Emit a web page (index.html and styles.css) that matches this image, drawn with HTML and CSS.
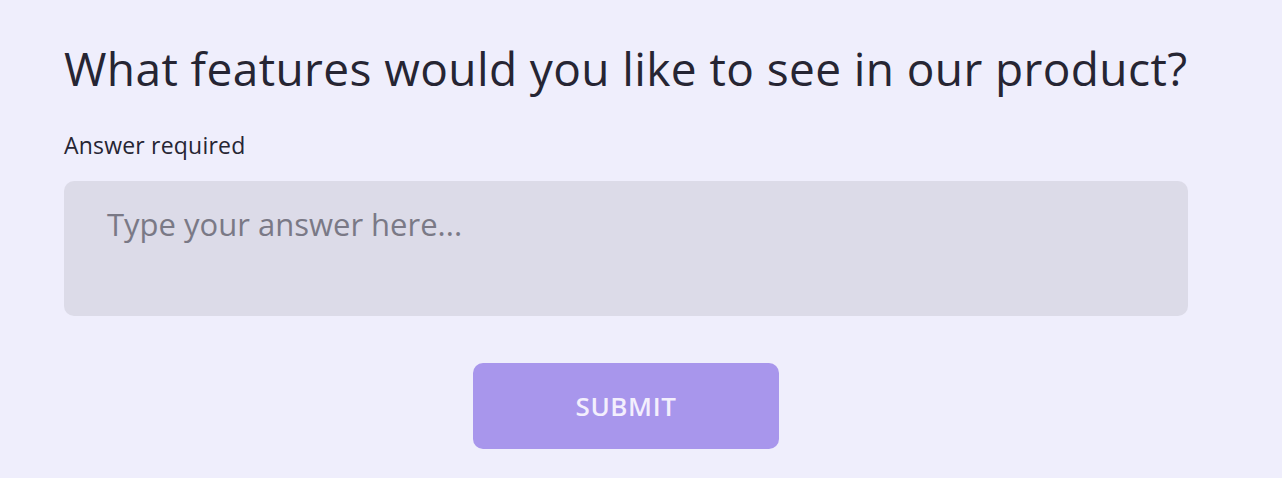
FILE: index.html
```html
<!DOCTYPE html>
<html lang="en">
<head>
  <meta charset="UTF-8" />
  <meta name="viewport" content="width=device-width, initial-scale=1.0"/>
  <title>Feedback</title>
  <link rel="stylesheet" href="styles.css">
</head>
<body>
  <form class="question">
    <h1 class="question-title">What features would you like to see in our product?</h1>
    <label class="question-hint" for="answer">Answer required</label>
    <textarea id="answer" class="answer" placeholder="Type your answer here..."></textarea>
    <div class="actions">
      <button type="submit" class="submit">SUBMIT</button>
    </div>
  </form>
</body>
</html>
```

FILE: styles.css
```css
body {
  font-family: "Open Sans", "Noto Sans", sans-serif;
  margin: 0;
  background: #efeefc;
  color: #262533;
}

.question {
  width: 1124px;
  padding: 38px 0 0 64px;
  display: flex;
  flex-direction: column;
}

.question-title {
  font-size: 46px;
  font-weight: 400;
  line-height: 60px;
  letter-spacing: 0.4px;
  white-space: nowrap;
  margin: 0 0 33px 0;
}

.question-hint {
  font-size: 23px;
  line-height: 28px;
  letter-spacing: 0.2px;
  margin-bottom: 22px;
}

.answer {
  height: 135px;
  box-sizing: border-box;
  padding: 22px 43px;
  font-family: inherit;
  font-size: 31px;
  line-height: 42px;
  border: none;
  border-radius: 10px;
  background-color: #dcdbe8;
  resize: none;
  outline: none;
}

.answer::placeholder {
  color: #7a7986;
}

.actions {
  display: flex;
  justify-content: center;
  margin-top: 47px;
}

.submit {
  width: 306px;
  height: 86px;
  font-family: inherit;
  font-size: 26px;
  font-weight: 600;
  letter-spacing: 0.6px;
  color: #f3effd;
  background-color: #a896ec;
  border: none;
  border-radius: 10px;
  cursor: pointer;
}
```
